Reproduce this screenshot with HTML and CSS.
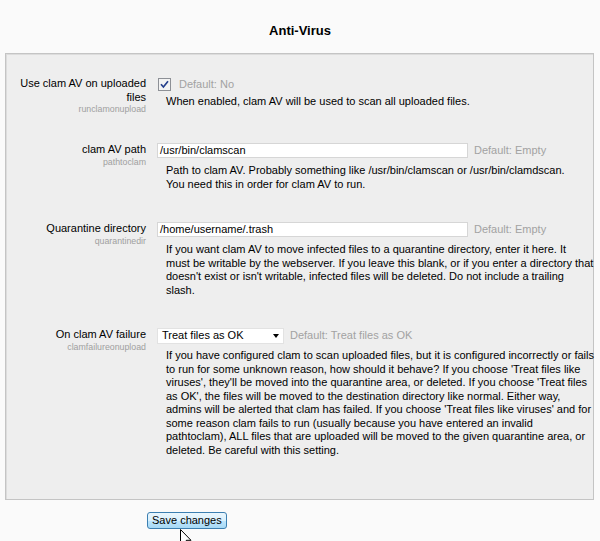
FILE: index.html
```html
<!DOCTYPE html>
<html>
<head>
<meta charset="utf-8">
<title>Anti-Virus</title>
<link rel="stylesheet" href="styles.css">
</head>
<body>
<h2 class="title">Anti-Virus</h2>
<div class="panel">
  <div class="row row-check">
    <div class="label">
      <div class="name">Use clam AV on uploaded files</div>
      <div class="key">runclamonupload</div>
    </div>
    <div class="control">
      <div class="line">
        <svg class="checkbox" width="13" height="13" viewBox="0 0 13 13"><rect x="0.5" y="0.5" width="12" height="12" fill="#f3f3f3" stroke="#8d9096"/><path d="M3 6.3 L5.4 9 L10 3.3" fill="none" stroke="#253f8c" stroke-width="1.7"/></svg>
        <span class="default">Default: No</span>
      </div>
      <div class="desc">When enabled, clam AV will be used to scan all uploaded files.</div>
    </div>
  </div>

  <div class="row">
    <div class="label">
      <div class="name">clam AV path</div>
      <div class="key">pathtoclam</div>
    </div>
    <div class="control">
      <div class="line">
        <span class="input">/usr/bin/clamscan</span>
        <span class="default">Default: Empty</span>
      </div>
      <div class="desc">Path to clam AV. Probably something like /usr/bin/clamscan or /usr/bin/clamdscan.<br>You need this in order for clam AV to run.</div>
    </div>
  </div>

  <div class="row">
    <div class="label">
      <div class="name">Quarantine directory</div>
      <div class="key">quarantinedir</div>
    </div>
    <div class="control">
      <div class="line">
        <span class="input">/home/username/.trash</span>
        <span class="default">Default: Empty</span>
      </div>
      <div class="desc">If you want clam AV to move infected files to a quarantine directory, enter it here. It<br>must be writable by the webserver. If you leave this blank, or if you enter a directory that<br>doesn't exist or isn't writable, infected files will be deleted. Do not include a trailing<br>slash.</div>
    </div>
  </div>

  <div class="row row-select">
    <div class="label">
      <div class="name">On clam AV failure</div>
      <div class="key">clamfailureonupload</div>
    </div>
    <div class="control">
      <div class="line line-select">
        <span class="select"><span>Treat files as OK</span><span class="caret"></span></span>
        <span class="default">Default: Treat files as OK</span>
      </div>
      <div class="desc">If you have configured clam to scan uploaded files, but it is configured incorrectly or fails<br>to run for some unknown reason, how should it behave? If you choose 'Treat files like<br>viruses', they'll be moved into the quarantine area, or deleted. If you choose 'Treat files<br>as OK', the files will be moved to the destination directory like normal. Either way,<br>admins will be alerted that clam has failed. If you choose 'Treat files like viruses' and for<br>some reason clam fails to run (usually because you have entered an invalid<br>pathtoclam), ALL files that are uploaded will be moved to the given quarantine area, or<br>deleted. Be careful with this setting.</div>
    </div>
  </div>
</div>
<div class="actions">
  <button class="save" type="button">Save changes</button>
</div>
<svg class="cursor" width="12" height="19" viewBox="0 0 12 19"><path d="M0.5 0.5 L0.5 15.5 L4 12 L6.5 17.8 L8.6 16.9 L6.2 11.3 L11 11.3 Z" fill="#fff" stroke="#000" stroke-width="1"/></svg>
</body>
</html>
```
FILE: styles.css
```css
html, body {
  margin: 0;
  padding: 0;
}
body {
  background: #fafafa;
  font-family: "Liberation Sans", Arial, sans-serif;
  font-size: 11px;
  line-height: 13.5px;
  color: #000;
  position: relative;
  height: 541px;
  overflow: hidden;
}
.title {
  font-size: 13px;
  line-height: 16px;
  font-weight: bold;
  text-align: center;
  margin: 23px 0 14px;
}
.panel {
  margin: 0 6px 0 5px;
  background: #eeeeee;
  border: 1px solid #c4c4c4;
  box-shadow: inset 1px 1px 0 #dcdcdc;
  padding: 23px 12px 42px 12px;
}
.row {
  display: grid;
  grid-template-columns: 128px 1fr;
  column-gap: 11px;
  align-items: start;
  margin-bottom: 31px;
}
.row-check {
  margin-bottom: 29px;
}
.row:last-child {
  margin-bottom: 0;
}
.label {
  text-align: right;
}
.key {
  font-size: 8.8px;
  line-height: 10px;
  color: #a0a0a0;
}
.line {
  display: flex;
  align-items: center;
  gap: 6px;
  height: 15px;
}
.line-select {
  height: 16px;
}
.checkbox {
  margin-left: 1px;
  margin-right: 2px;
}
.default {
  color: #a2a2a2;
}
.input {
  box-sizing: border-box;
  width: 311px;
  height: 15px;
  background: #fff;
  border: 1px solid #d6d6d6;
  padding: 0 2px;
  line-height: 13px;
}
.select {
  box-sizing: border-box;
  width: 127px;
  height: 16px;
  background: #fff;
  border: 1px solid #e2e2e2;
  padding: 0 4px;
  display: flex;
  align-items: center;
  justify-content: space-between;
}
.caret {
  width: 0;
  height: 0;
  border-left: 3.5px solid transparent;
  border-right: 3.5px solid transparent;
  border-top: 4px solid #000;
}
.desc {
  margin: 6px 0 0 9px;
  white-space: nowrap;
}
.row-check .desc {
  margin-top: 3px;
}
.row-select .desc {
  margin-top: 5px;
}
.actions {
  padding: 12px 0 0 147px;
}
.save {
  font-family: "Liberation Sans", Arial, sans-serif;
  font-size: 11px;
  line-height: 13px;
  height: 17px;
  padding: 0 4px;
  border: 1px solid #3c7fb1;
  border-radius: 3px;
  background: linear-gradient(#eaf6fd, #d9f0fc 50%, #bee6fd 51%, #a7d9f5);
  color: #000;
}
.cursor {
  position: absolute;
  left: 180px;
  top: 529px;
}
```
